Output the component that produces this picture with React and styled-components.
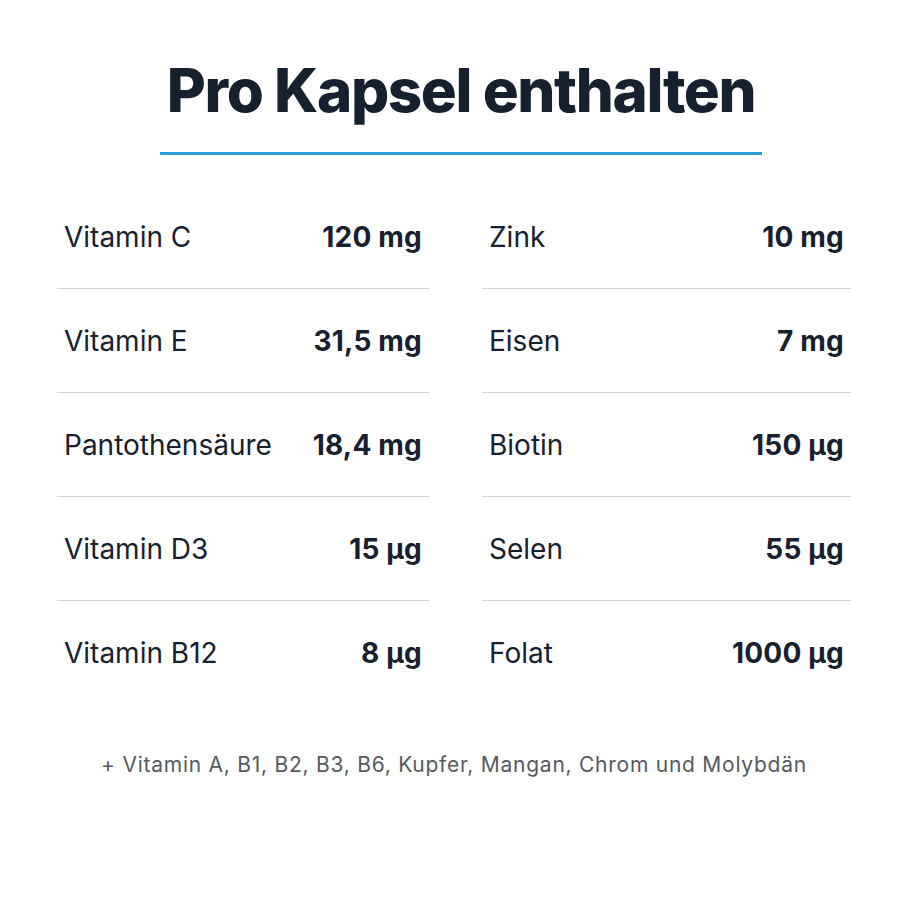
import React from "react";
import styled, { createGlobalStyle } from "styled-components";

const left = [
  ["Vitamin C", "120 mg"],
  ["Vitamin E", "31,5 mg"],
  ["Pantothensäure", "18,4 mg"],
  ["Vitamin D3", "15 µg"],
  ["Vitamin B12", "8 µg"],
];

const right = [
  ["Zink", "10 mg"],
  ["Eisen", "7 mg"],
  ["Biotin", "150 µg"],
  ["Selen", "55 µg"],
  ["Folat", "1000 µg"],
];

const Column = ({ items }) => (
  <List>
    {items.map(([name, amount], i) => (
      <Row key={name} $last={i === items.length - 1}>
        <Name>{name}</Name>
        <Amount>{amount}</Amount>
      </Row>
    ))}
  </List>
);

const App = () => {
  return (
    <>
      <GlobalStyle />
      <Page>
        <Header>
          <Title>Pro Kapsel enthalten</Title>
          <Rule />
        </Header>
        <Grid>
          <Column items={left} />
          <Column items={right} />
        </Grid>
        <Footnote>
          + Vitamin A, B1, B2, B3, B6, Kupfer, Mangan, Chrom und Molybdän
        </Footnote>
      </Page>
    </>
  );
};

export default App;

const GlobalStyle = createGlobalStyle`
  body {
    margin: 0;
    background: #ffffff;
    font-family: "Inter", "Noto Sans", sans-serif;
  }
`;

const Page = styled.div`
  width: 900px;
  height: 900px;
  box-sizing: border-box;
  padding: 52px 0 0 8px;
  display: flex;
  flex-direction: column;
  align-items: center;
  color: #17202e;
`;

const Header = styled.header`
  margin-left: 14px;
  display: flex;
  flex-direction: column;
  align-items: center;
`;

const Title = styled.h1`
  margin: 0;
  font-size: 60px;
  line-height: 76px;
  font-weight: 800;
  letter-spacing: -1.4px;
  color: #17202e;
`;

const Rule = styled.div`
  width: 602px;
  height: 3px;
  margin-top: 24px;
  background: #2b9fd9;
`;

const Grid = styled.div`
  width: 794px;
  margin-top: 30px;
  display: grid;
  grid-template-columns: 372px 369px;
  column-gap: 53px;
`;

const List = styled.div`
  display: flex;
  flex-direction: column;
`;

const Row = styled.div`
  height: 104px;
  box-sizing: border-box;
  padding: 0 7px;
  display: flex;
  align-items: center;
  justify-content: space-between;
  border-bottom: 1px solid ${(p) => (p.$last ? "transparent" : "#d3d3d3")};
`;

const Name = styled.span`
  font-size: 28px;
  font-weight: 400;
  letter-spacing: 0;
`;

const Amount = styled.span`
  font-size: 28px;
  font-weight: 700;
  letter-spacing: 0.2px;
`;

const Footnote = styled.p`
  margin: 47px 0 0;
  font-size: 21px;
  letter-spacing: 0.75px;
  color: #555a60;
`;
